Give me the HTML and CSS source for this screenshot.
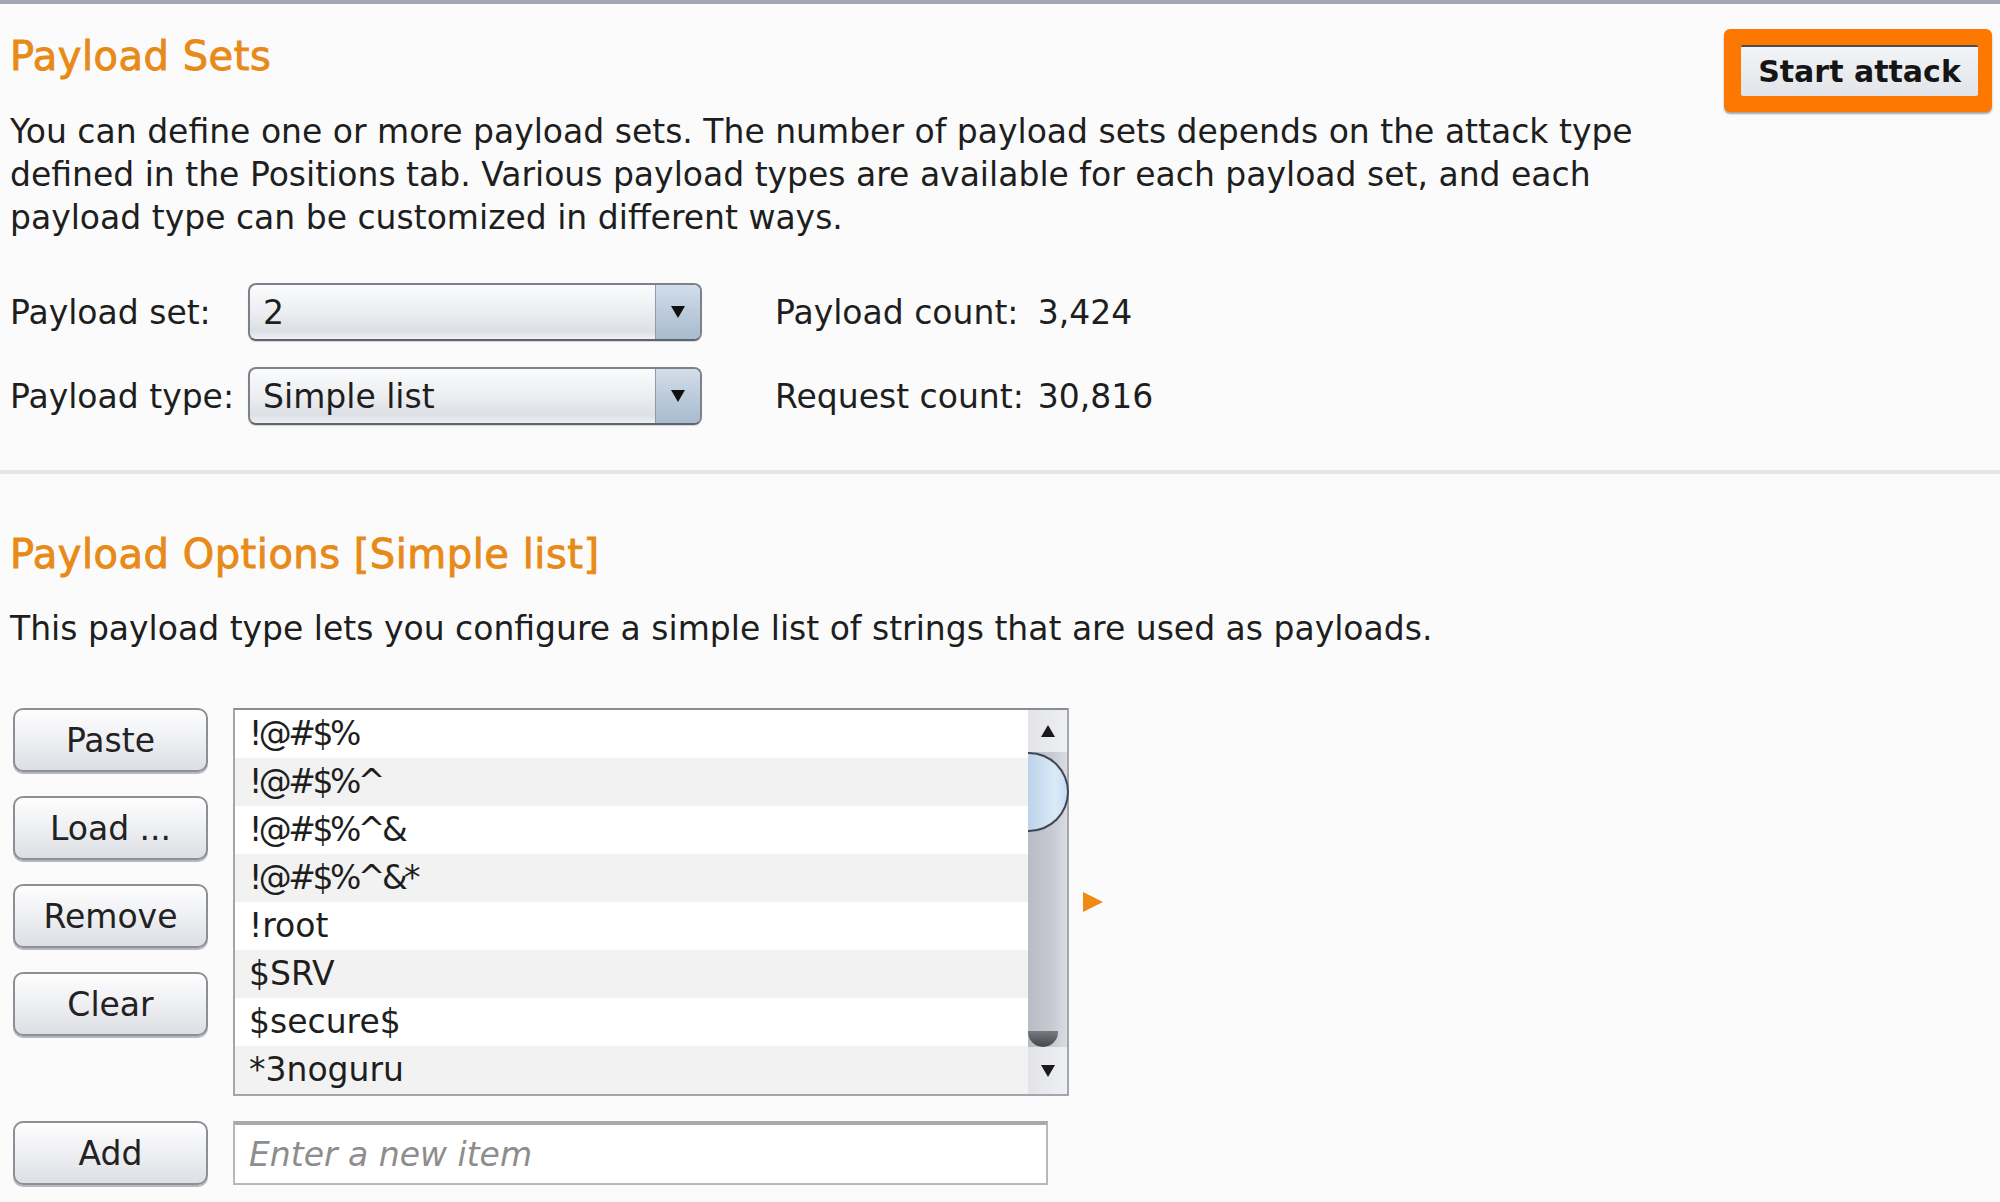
FILE: index.html
```html
<!DOCTYPE html>
<html>
<head>
<meta charset="utf-8">
<title>Payloads</title>
<link rel="stylesheet" href="styles.css">
</head>
<body>
<div class="page">
  <section class="sets">
    <div class="sets-top">
      <div class="sets-intro">
        <h1 class="heading">Payload Sets</h1>
        <p class="desc">You can define one or more payload sets. The number of payload sets depends on the attack type<br>defined in the Positions tab. Various payload types are available for each payload set, and each<br>payload type can be customized in different ways.</p>
      </div>
      <div class="attack-wrap"><button class="attack-btn">Start attack</button></div>
    </div>
    <div class="set-grid">
      <span class="label">Payload set:</span>
      <div class="combo"><span class="combo-value">2</span><span class="combo-arrow"><svg width="16" height="14" viewBox="0 0 16 14"><path d="M1 1h14L8 13z" fill="#111"/></svg></span></div>
      <span class="count-label">Payload count:</span>
      <span class="count-value">3,424</span>
      <span class="label">Payload type:</span>
      <div class="combo"><span class="combo-value">Simple list</span><span class="combo-arrow"><svg width="16" height="14" viewBox="0 0 16 14"><path d="M1 1h14L8 13z" fill="#111"/></svg></span></div>
      <span class="count-label">Request count:</span>
      <span class="count-value">30,816</span>
    </div>
  </section>
  <section class="options">
    <h2 class="heading">Payload Options [Simple list]</h2>
    <p class="desc desc-single">This payload type lets you configure a simple list of strings that are used as payloads.</p>
    <div class="editor">
      <div class="btn-col">
        <button class="btn">Paste</button>
        <button class="btn">Load ...</button>
        <button class="btn">Remove</button>
        <button class="btn">Clear</button>
      </div>
      <div class="listbox">
        <ul class="rows">
          <li class="row row-sym">!@#$%</li>
          <li class="row row-sym">!@#$%^</li>
          <li class="row row-sym">!@#$%^&amp;</li>
          <li class="row row-sym">!@#$%^&amp;*</li>
          <li class="row">!root</li>
          <li class="row">$SRV</li>
          <li class="row">$secure$</li>
          <li class="row">*3noguru</li>
        </ul>
        <div class="scrollbar">
          <div class="sb-arrow sb-up"><svg width="16" height="14" viewBox="0 0 16 14"><path d="M8 1L15 13H1z" fill="#1a1a1a"/></svg></div>
          <div class="sb-thumb"><div class="sb-cap"></div><div class="sb-end"></div></div>
          <div class="sb-arrow sb-down"><svg width="16" height="14" viewBox="0 0 16 14"><path d="M1 1h14L8 13z" fill="#1a1a1a"/></svg></div>
        </div>
      </div>
      <svg class="pointer" width="22" height="22" viewBox="0 0 22 22"><path d="M1 1L21 11L1 21z" fill="#ef8a14"/></svg>
    </div>
    <div class="add-row">
      <button class="btn">Add</button>
      <input class="new-item" type="text" placeholder="Enter a new item">
    </div>
  </section>
</div>
</body>
</html>
```
FILE: styles.css
```css
* { box-sizing: border-box; }
html, body { margin: 0; padding: 0; }
body {
  background: #fbfbfb;
  font-family: "DejaVu Sans", "Liberation Sans", sans-serif;
  font-size: 33px;
  color: #1e1e1e;
  width: 2000px;
  height: 1202px;
  overflow: hidden;
}
.page {
  border-top: 4px solid #a3a7af;
}
.heading {
  margin: 0;
  font-size: 40px;
  line-height: 48px;
  font-weight: normal;
  letter-spacing: 0.5px;
  color: #e88a17;
  -webkit-text-stroke: 0.9px #e88a17;
}
.desc {
  margin: 0;
  line-height: 43px;
}
/* --- Payload sets --- */
.sets {
  padding: 25px 8px 45px 10px;
  border-bottom: 4px solid #e6e6e6;
}
.sets-top {
  display: flex;
  justify-content: space-between;
  align-items: flex-start;
}
.sets-intro .heading { margin-top: 3px; }
.sets-intro .desc { margin-top: 30px; }
.attack-wrap {
  background: #fc7800;
  border-radius: 6px;
  padding: 16px 14px 16px 17px;
  box-shadow: 0 2px 2px rgba(0,0,0,0.35);
}
.attack-btn {
  display: block;
  width: 237px;
  height: 51px;
  border: 0;
  border-top: 2px solid #4a4d52;
  border-radius: 2px;
  background: linear-gradient(#f3f4f7, #e2e4e9);
  font-family: "DejaVu Sans", sans-serif;
  font-weight: bold;
  font-size: 30px;
  color: #151515;
  padding: 0;
}
.set-grid {
  margin-top: 44px;
  display: grid;
  grid-template-columns: auto 454px auto auto;
  grid-auto-rows: 58px;
  column-gap: 14px;
  row-gap: 26px;
  align-items: center;
  justify-content: start;
}
.count-label { margin-left: 59px; }
.combo {
  height: 58px;
  border: 2px solid #7d828a;
  border-bottom-color: #60656d;
  border-radius: 8px;
  background: linear-gradient(#fafbfc, #eceef1 50%, #dcdfe4 85%, #eef0f3);
  display: flex;
  align-items: center;
  overflow: hidden;
  box-shadow: 0 1px 1px rgba(0,0,0,0.15);
}
.combo-value {
  flex: 1;
  padding-left: 13px;
  line-height: 1;
}
.combo-arrow {
  width: 45px;
  align-self: stretch;
  border-left: 1px solid #8e9bab;
  background: linear-gradient(#d2dde9, #b8c8d9 60%, #a9bccf);
  display: flex;
  align-items: center;
  justify-content: center;
}
/* --- Payload options --- */
.options {
  padding: 56px 0 0 10px;
}
.desc-single { margin-top: 29px; }
.editor {
  margin-top: 58px;
  display: flex;
  align-items: flex-start;
}
.btn-col {
  margin-left: 3px;
  display: flex;
  flex-direction: column;
  gap: 24px;
}
.btn {
  width: 195px;
  height: 64px;
  border: 2px solid #8c9096;
  border-radius: 10px;
  background: linear-gradient(#fefefe, #f0f1f4 45%, #dcdfe4);
  box-shadow: 0 2px 0 #b5b8be;
  font-family: "DejaVu Sans", sans-serif;
  font-size: 33px;
  color: #222;
  padding: 0;
}
.listbox {
  margin-left: 25px;
  width: 836px;
  height: 388px;
  border: 2px solid #a3a6ab;
  border-top-color: #8a8d92;
  background: #fff;
  display: flex;
}
.rows {
  list-style: none;
  margin: 0;
  padding: 0;
  flex: 1;
}
.row {
  height: 48px;
  line-height: 48px;
  padding-left: 14px;
  background: #fff;
}
.row:nth-child(even) { background: #f2f2f2; }
.row-sym { letter-spacing: -3.5px; }
.scrollbar {
  width: 39px;
  display: flex;
  flex-direction: column;
  background: linear-gradient(90deg, #e3e4e8, #eeeff2);
}
.sb-arrow {
  display: flex;
  align-items: center;
  justify-content: center;
}
.sb-up { height: 42px; }
.sb-down { height: 47px; }
.sb-thumb {
  flex: 1;
  background: linear-gradient(90deg, #b9bcc4, #c6c9d0 60%, #dadce1);
  display: flex;
  flex-direction: column;
  justify-content: space-between;
}
.sb-cap {
  height: 80px;
  margin-right: -2px;
  background: linear-gradient(90deg, #bcd3ea, #dbeaf8 70%, #c8dcf0);
  border: 2px solid #3c4858;
  border-left: 0;
  border-radius: 0 40px 40px 0 / 0 40px 40px 0;
}
.sb-end {
  height: 16px;
  width: 30px;
  background: linear-gradient(#6a6d73, #2e3035);
  border-radius: 0 0 16px 16px;
  opacity: 0.85;
}
.pointer {
  align-self: center;
  margin-left: 13px;
}
.add-row {
  margin-top: 25px;
  display: flex;
}
.add-row .btn { margin-left: 3px; }
.new-item {
  margin-left: 25px;
  width: 815px;
  height: 64px;
  border: 2px solid #b8b8b8;
  border-top: 4px solid #a9a9a9;
  background: #fff;
  padding: 0 0 0 14px;
  font-family: "DejaVu Sans", sans-serif;
  font-size: 33px;
  color: #222;
  outline: none;
}
.new-item::placeholder {
  font-style: italic;
  color: #8d8d8d;
}
```
